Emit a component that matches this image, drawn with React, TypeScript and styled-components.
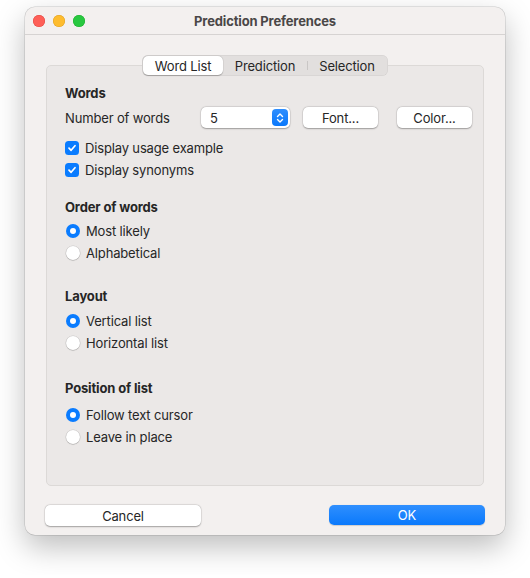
import styled, { createGlobalStyle } from 'styled-components';

const GlobalStyle = createGlobalStyle`
  body {
    margin: 0;
    background: #ffffff;
    font-family: Inter, "Liberation Sans", sans-serif;
    font-size: 13px;
    letter-spacing: -0.15px;
    color: #262626;
  }
`;

const Page = styled.div`
  padding: 7px 25px 40px 25px;
`;

const Window = styled.div`
  width: 480px;
  height: 528px;
  box-sizing: border-box;
  background: #f3f0ef;
  border-radius: 10px;
  box-shadow: 0 0 0 0.5px rgba(0, 0, 0, 0.18), 0 12px 30px rgba(0, 0, 0, 0.26);
  display: flex;
  flex-direction: column;
  overflow: hidden;
`;

const TitleBar = styled.div`
  height: 28px;
  box-sizing: border-box;
  border-bottom: 1px solid #d6d3d2;
  display: flex;
  align-items: center;
  position: relative;
  padding-left: 8px;
  gap: 8px;
`;

const Light = styled.span<{ $color: string; $edge: string }>`
  width: 12px;
  height: 12px;
  border-radius: 50%;
  background: ${(p) => p.$color};
  box-shadow: inset 0 0 0 0.5px ${(p) => p.$edge};
`;

const Title = styled.div`
  position: absolute;
  left: 0;
  right: 0;
  text-align: center;
  font-weight: 700;
  color: #4a4747;
  pointer-events: none;
`;

const Body = styled.div`
  flex: 1;
  display: flex;
  flex-direction: column;
  padding: 20px 20px 0 20px;
`;

const TabArea = styled.div`
  display: flex;
  flex-direction: column;
  align-items: center;
  padding: 0 1px;
`;

const Tabs = styled.div`
  display: flex;
  height: 21px;
  box-sizing: border-box;
  padding: 1px;
  background: #e2dfde;
  border-radius: 6px;
  box-shadow: inset 0 0 0 0.5px rgba(0, 0, 0, 0.08);
  position: relative;
  z-index: 1;
  margin-bottom: -11px;
`;

const Tab = styled.div<{ $active?: boolean; $width: number; $divider?: boolean }>`
  width: ${(p) => p.$width}px;
  display: flex;
  align-items: center;
  justify-content: center;
  border-radius: 5px;
  position: relative;
  background: ${(p) => (p.$active ? '#ffffff' : 'transparent')};
  box-shadow: ${(p) =>
    p.$active ? '0 0.5px 1px rgba(0,0,0,0.25), 0 0 0 0.5px rgba(0,0,0,0.06)' : 'none'};

  &::before {
    content: '';
    display: ${(p) => (p.$divider ? 'block' : 'none')};
    position: absolute;
    left: 0;
    top: 5px;
    bottom: 5px;
    width: 1px;
    background: #c9c6c5;
  }
`;

const Panel = styled.div`
  align-self: stretch;
  height: 421px;
  box-sizing: border-box;
  background: #ebe8e7;
  border: 1px solid #dcd9d7;
  border-radius: 5px;
  padding: 19px 10px 0 18px;
  display: flex;
  flex-direction: column;
`;

const Section = styled.div<{ $top: number }>`
  display: flex;
  flex-direction: column;
  margin-top: ${(p) => p.$top}px;
`;

const Heading = styled.div<{ $gap: number }>`
  font-weight: 700;
  line-height: 16px;
  margin-bottom: ${(p) => p.$gap}px;
`;

const ControlRow = styled.div`
  display: flex;
  align-items: center;
  height: 21px;
  margin-bottom: 9px;

  & > * {
    flex-shrink: 0;
  }
`;

const RowLabel = styled.div`
  width: 136px;
`;

const Spacer = styled.div<{ $w: number }>`
  width: ${(p) => p.$w}px;
`;

const Popup = styled.div`
  width: 89px;
  height: 21px;
  box-sizing: border-box;
  background: #ffffff;
  border-radius: 5px;
  box-shadow: 0 0.5px 1.5px rgba(0, 0, 0, 0.3), 0 0 0 0.5px rgba(0, 0, 0, 0.08);
  display: flex;
  align-items: center;
  justify-content: space-between;
  padding: 0 2px 0 9px;
`;

const Stepper = styled.div`
  width: 16px;
  height: 17px;
  border-radius: 4px;
  background: linear-gradient(#2e8efe, #0a78fb);
  display: flex;
  align-items: center;
  justify-content: center;
`;

const PushButton = styled.div<{ $width: number; $primary?: boolean }>`
  width: ${(p) => p.$width}px;
  height: ${(p) => (p.$primary ? 20 : 21)}px;
  box-sizing: border-box;
  border-radius: 5px;
  display: flex;
  align-items: center;
  justify-content: center;
  background: ${(p) => (p.$primary ? 'linear-gradient(#2f8ffe, #0a79fc)' : '#ffffff')};
  color: ${(p) => (p.$primary ? '#ffffff' : '#262626')};
  box-shadow: ${(p) =>
    p.$primary
      ? '0 0.5px 1px rgba(0,0,0,0.15)'
      : '0 0.5px 1.5px rgba(0,0,0,0.3), 0 0 0 0.5px rgba(0,0,0,0.08)'};
`;

const Option = styled.div`
  display: flex;
  align-items: center;
  height: 22px;
  gap: 6px;
`;

const Check = styled.span`
  width: 14px;
  height: 14px;
  border-radius: 3.5px;
  background: #0a7cff;
  display: flex;
  align-items: center;
  justify-content: center;
`;

const Radio = styled.span<{ $on?: boolean }>`
  width: 14px;
  height: 14px;
  box-sizing: border-box;
  border-radius: 50%;
  margin-left: 1px;
  display: flex;
  align-items: center;
  justify-content: center;
  background: ${(p) => (p.$on ? '#0a7cff' : '#ffffff')};
  box-shadow: ${(p) =>
    p.$on ? 'none' : '0 0.5px 1px rgba(0,0,0,0.25), 0 0 0 0.5px rgba(0,0,0,0.12)'};

  &::after {
    content: '';
    display: ${(p) => (p.$on ? 'block' : 'none')};
    width: 6px;
    height: 6px;
    border-radius: 50%;
    background: #ffffff;
  }
`;

const Footer = styled.div`
  display: flex;
  justify-content: space-between;
  margin-top: 19px;
`;

const CheckOption = ({ label }: { label: string }) => (
  <Option>
    <Check>
      <svg width="10" height="10" viewBox="0 0 10 10">
        <path d="M2 5.2 L4.1 7.3 L8 2.7" fill="none" stroke="#fff" strokeWidth="1.7" strokeLinecap="round" strokeLinejoin="round" />
      </svg>
    </Check>
    {label}
  </Option>
);

const RadioOption = ({ label, on }: { label: string; on?: boolean }) => (
  <Option>
    <Radio $on={on} />
    {label}
  </Option>
);

const App = () => {
  return (
    <Page>
      <GlobalStyle />
      <Window>
        <TitleBar>
          <Light $color="#fe5f57" $edge="#e14640" />
          <Light $color="#febc2e" $edge="#dfa023" />
          <Light $color="#28c840" $edge="#1dad2b" />
          <Title>Prediction Preferences</Title>
        </TitleBar>
        <Body>
          <TabArea>
            <Tabs>
              <Tab $active $width={80}>Word List</Tab>
              <Tab $width={84}>Prediction</Tab>
              <Tab $width={80} $divider>Selection</Tab>
            </Tabs>
            <Panel>
              <Section $top={0}>
                <Heading $gap={6}>Words</Heading>
                <ControlRow>
                  <RowLabel>Number of words</RowLabel>
                  <Popup>
                    5
                    <Stepper>
                      <svg width="8" height="12" viewBox="0 0 8 12">
                        <path d="M1.5 4.5 L4 2 L6.5 4.5 M1.5 7.5 L4 10 L6.5 7.5" fill="none" stroke="#fff" strokeWidth="1.4" strokeLinecap="round" strokeLinejoin="round" />
                      </svg>
                    </Stepper>
                  </Popup>
                  <Spacer $w={13} />
                  <PushButton $width={75}>Font...</PushButton>
                  <Spacer $w={19} />
                  <PushButton $width={75}>Color...</PushButton>
                </ControlRow>
                <CheckOption label="Display usage example" />
                <CheckOption label="Display synonyms" />
              </Section>
              <Section $top={18}>
                <Heading $gap={5}>Order of words</Heading>
                <RadioOption label="Most likely" on />
                <RadioOption label="Alphabetical" />
              </Section>
              <Section $top={24}>
                <Heading $gap={6}>Layout</Heading>
                <RadioOption label="Vertical list" on />
                <RadioOption label="Horizontal list" />
              </Section>
              <Section $top={26}>
                <Heading $gap={8}>Position of list</Heading>
                <RadioOption label="Follow text cursor" on />
                <RadioOption label="Leave in place" />
              </Section>
            </Panel>
          </TabArea>
          <Footer>
            <PushButton $width={156}>Cancel</PushButton>
            <PushButton $width={156} $primary>OK</PushButton>
          </Footer>
        </Body>
      </Window>
    </Page>
  );
};

export default App;
